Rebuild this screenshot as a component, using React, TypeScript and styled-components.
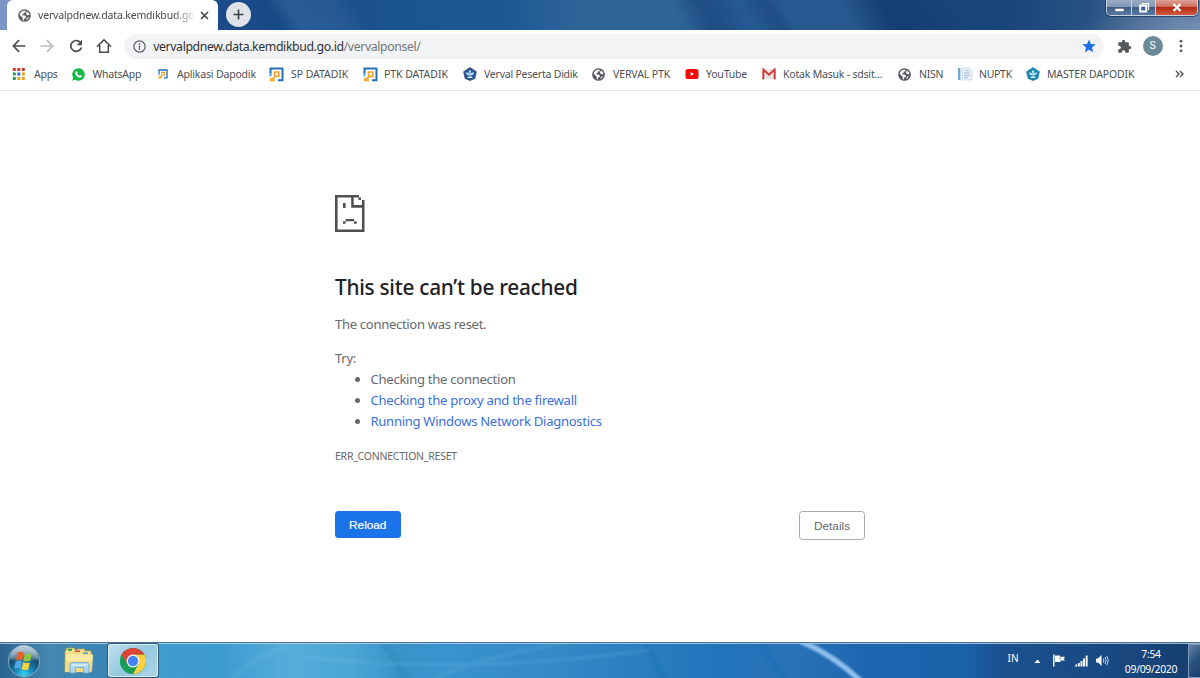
import React from "react";
import styled, { createGlobalStyle, css } from "styled-components";

const GlobalStyle = createGlobalStyle`
  * { box-sizing: border-box; }
  html, body { margin: 0; padding: 0; overflow: hidden; }
  body { font-family: "Noto Sans", "Open Sans", sans-serif; background: #fff; }
  svg { display: block; flex: none; }
`;

const Screen = styled.div`
  width: 1200px;
  height: 678px;
  display: flex;
  flex-direction: column;
  background: #fff;
  overflow: hidden;
`;

const Text = styled.span<{ $spacing?: number }>`
  letter-spacing: ${(p) => p.$spacing ?? 0}px;
  white-space: nowrap;
`;

/* ---------- Tab strip ---------- */

const TabStrip = styled.header`
  height: 30px;
  flex: none;
  display: flex;
  background:
    radial-gradient(ellipse 110px 34px at 1190px 32px, rgba(150, 170, 195, 0.45), transparent),
    linear-gradient(58deg, transparent 241px, rgba(75, 120, 175, 0.36) 256px, rgba(65, 110, 170, 0.3) 298px, transparent 314px),
    linear-gradient(58deg, transparent 585px, rgba(20, 60, 115, 0.5) 607px, transparent 640px, rgba(20, 60, 115, 0.45) 665px, transparent 676px),
    linear-gradient(58deg, transparent 728px, rgba(18, 58, 110, 0.75) 762px, rgba(18, 58, 110, 0) 850px),
    linear-gradient(90deg, #7b96c4 0, #7b96c4 8px, #1d4a88 220px, #174a87 290px, #1c5490 400px, #1d5794 500px, #2f6599 590px, #2f6599 670px, #265a93 720px, #28588f 850px, #1a4a80 900px, #17447b 1000px, #2a5283 1090px, #5b7ba3 1200px);
`;

const Tab = styled.div`
  width: 211px;
  height: 30px;
  margin-left: 7px;
  padding: 0 9px 0 11px;
  display: flex;
  align-items: center;
  background: #fff;
  border-radius: 6px 6px 0 0;
`;

const TabTitle = styled.div`
  width: 155px;
  margin-left: 7px;
  font-size: 10.5px;
  line-height: 16px;
  color: #45494d;
  mask-image: linear-gradient(90deg, #000 135px, rgba(0, 0, 0, 0.3) 153px);
`;

const CloseTab = styled.div`
  margin-left: auto;
`;

const NewTab = styled.div`
  width: 25px;
  height: 25px;
  margin: 2px 0 0 8px;
  border-radius: 50%;
  background: #dfe3e9;
  display: grid;
  place-items: center;
`;

const WindowControls = styled.div`
  height: 16px;
  margin-left: auto;
  margin-right: 2px;
  display: flex;
  border: 1px solid #c4d1e0;
  border-top: 0;
  border-radius: 0 0 5px 5px;
  box-shadow: 0 0 0 1px rgba(20, 40, 75, 0.6);
  overflow: hidden;
`;

const WindowButton = styled.div<{ $width: number; $close?: boolean }>`
  width: ${(p) => p.$width}px;
  display: grid;
  place-items: center;
  border-right: 1px solid #c4d1e0;
  background: linear-gradient(#9aadc5 0, #8097b4 45%, #3f5e86 50%, #5c7ba1 100%);
  ${(p) =>
    p.$close &&
    css`
      border-right: 0;
      background: linear-gradient(#dda296 0, #cc6b59 45%, #b32a15 50%, #d2593c 100%);
    `}
`;

/* ---------- Toolbar ---------- */

const Toolbar = styled.div`
  height: 32px;
  flex: none;
  display: flex;
  align-items: center;
  padding-left: 11px;
  background: #fff;
`;

const NavButtons = styled.div`
  display: flex;
  gap: 12.4px;
`;

const AddressBar = styled.div`
  width: 980px;
  height: 25px;
  margin-left: 12px;
  padding: 0 8px 0 9px;
  display: flex;
  align-items: center;
  border-radius: 13px;
  background: #f1f3f4;
`;

const Url = styled.div`
  flex: 1;
  margin-left: 7px;
  font-size: 12.3px;
  color: #303236;
`;

const UrlPath = styled.span`
  color: #74787c;
`;

const Menu = styled.div`
  display: flex;
  align-items: center;
  gap: 11px;
  margin-left: 12.5px;
`;

const Avatar = styled.div`
  width: 20px;
  height: 20px;
  margin-right: 5px;
  border-radius: 50%;
  background: #6b8996;
  color: #fff;
  display: grid;
  place-items: center;
  font: 10.5px/20px Roboto, sans-serif;
`;

/* ---------- Bookmarks ---------- */

const BookmarkBar = styled.nav`
  height: 29px;
  flex: none;
  display: flex;
  align-items: center;
  padding: 0 16px 4px 11px;
  border-bottom: 1px solid #dcdee1;
`;

const Bookmark = styled.div<{ $width: number; $gap: number }>`
  width: ${(p) => p.$width}px;
  flex: none;
  display: flex;
  align-items: center;
  gap: ${(p) => p.$gap}px;
  font-size: 10.5px;
  line-height: 16px;
  color: #4b4f53;
`;

const Overflow = styled.div`
  margin-left: auto;
`;

/* ---------- Error page ---------- */

const Page = styled.main`
  flex: 1;
  display: flex;
  justify-content: center;
  padding-top: 104px;
`;

const ErrorColumn = styled.section`
  width: 530px;
  font-size: 13.1px;
  line-height: 21px;
  color: #66696d;
`;

const Title = styled.h1`
  margin: 40px 0 0;
  font-size: 20.8px;
  font-weight: 500;
  line-height: 28px;
  color: #202124;
`;

const Paragraph = styled.p<{ $top: number }>`
  margin: ${(p) => p.$top}px 0 0;
`;

const Suggestions = styled.ul`
  margin: 0;
  padding-left: 35.5px;
`;

const Suggestion = styled.li<{ $link?: boolean }>`
  height: 21.2px;
  & > span { color: ${(p) => (p.$link ? "#3b6fdc" : "inherit")}; }
`;

const ErrorCode = styled.div`
  margin-top: 13px;
  font-size: 10.5px;
`;

const Actions = styled.div`
  margin-top: 44px;
  display: flex;
  justify-content: space-between;
`;

const Button = styled.button<{ $primary?: boolean }>`
  width: ${(p) => (p.$primary ? 65.5 : 66)}px;
  height: ${(p) => (p.$primary ? 27.5 : 29)}px;
  padding: 1px 0 0;
  border-radius: 3.5px;
  border: ${(p) => (p.$primary ? "0" : "1px solid #a6a9ad")};
  background: ${(p) => (p.$primary ? "#1a73e8" : "#fff")};
  color: ${(p) => (p.$primary ? "#fff" : "#66696d")};
  font: 11.8px "Liberation Sans", Arial, sans-serif;
  -webkit-text-stroke: ${(p) => (p.$primary ? "0.2px #fff" : "0")};
`;

/* ---------- Taskbar ---------- */

const Taskbar = styled.footer`
  height: 36px;
  flex: none;
  position: relative;
  display: flex;
  border-top: 1px solid #52708f;
  box-shadow: inset 0 1px 0 rgba(190, 220, 240, 0.75);
  background: linear-gradient(90deg, #2a6591 0, #4587ae 50px, #3a86b5 105px, #3f9ccd 160px, #3c9bcf 220px, #55addb 290px, #4ba6d6 350px, #3993c9 400px, #3a94ce 440px, #3488c6 560px, #2b7fc0 640px, #2273bb 720px, #2a72b8 790px, #1d65ae 870px, #1a62aa 965px, #1b5190 1000px, #194a83 1100px, #173f70 1190px);
`;

const Streaks = styled.svg`
  position: absolute;
  left: 160px;
  top: 1px;
`;

const TaskItem = styled.div<{ $left: number; $top?: number }>`
  position: relative;
  margin-left: ${(p) => p.$left}px;
  padding-top: ${(p) => p.$top ?? 2}px;
`;

const ActiveTask = styled.div`
  position: relative;
  width: 50px;
  height: 33px;
  margin: 1px 0 0 14px;
  display: grid;
  place-items: center;
  border: 1px solid #d8ecf5;
  border-radius: 2px;
  box-shadow: 0 0 0 1px #315b79;
  background: linear-gradient(135deg, #c1dfed, #93c7e0 50%, #a9d5e8);
`;

const Tray = styled.div`
  position: relative;
  margin-left: auto;
  display: flex;
  align-items: center;
  color: #fff;
  font-size: 10.4px;
`;

const Language = styled.div`
  width: 26px;
  margin-top: -5px;
  font-size: 10px;
`;

const TrayIcons = styled.div`
  display: flex;
  align-items: center;
  gap: 7.5px;
  margin-right: 15px;
`;

const Caret = styled.div`
  margin-right: 4px;
  padding-top: 1px;
`;

const Clock = styled.div`
  width: 54px;
  margin-right: 10px;
  padding-top: 2px;
  text-align: center;
  line-height: 15px;
`;

const ShowDesktop = styled.div`
  width: 12px;
  height: 34px;
  border: 1px solid #7c9abb;
  border-right: 0;
  background: linear-gradient(135deg, #6585a8, #2c527f 50%, #1b3f6c);
`;

/* ---------- Icons ---------- */

const Globe = ({ size = 13, color = "#55595e" }: { size?: number; color?: string }) => (
  <svg width={size} height={size} viewBox="0 0 16 16">
    <circle cx="8" cy="8" r="7.8" fill={color} />
    <path d="M2 7.200C2.300 4.500 4 2.600 6.500 2l3.200.1-.3 1.900-2.300.5-.2 1.600-2 .8.3.9 3.200.1 1.400 1.600-.3 1.600-1.900.7-.3 2.200-1.500-.1.100-2.600-1.400-1.700z" fill="#fff" opacity=".95" />
    <path d="M11.200 3c1.700 1 2.700 2.500 2.900 4.400l-2.500.2-1.800-1.300.4-1.600zM11 10.800l2.600-.5c-.7 1.500-1.900 2.600-3.400 3.200z" fill="#fff" opacity=".95" />
  </svg>
);

const Back = ({ color = "#494c50", flip = false }: { color?: string; flip?: boolean }) => (
  <svg width="16" height="16" viewBox="0 0 16 16" fill="none" stroke={color} strokeWidth="1.6" transform={flip ? "scale(-1 1)" : undefined}>
    <path d="M14.500 8H2.800M8.200 2.100L2.300 8l5.900 5.900" />
  </svg>
);

const Refresh = () => (
  <svg width="16" height="16" viewBox="0 0 16 16">
    <path d="M12.900 5.200A5.400 5.400 0 1 0 13.400 9.400" fill="none" stroke="#494c50" strokeWidth="1.700" />
    <path d="M14 1.800v5.400H8.600z" fill="#494c50" />
  </svg>
);

const Home = () => (
  <svg width="16" height="16" viewBox="0 0 16 16" fill="none" stroke="#494c50" strokeWidth="1.500">
    <path d="M.9 8.700L8 1.900l7.100 6.800M3.700 7v7.200h8.600V7" />
  </svg>
);

const Info = () => (
  <svg width="13" height="13" viewBox="0 0 13 13">
    <circle cx="6.500" cy="6.500" r="5.600" fill="none" stroke="#5a5e62" strokeWidth="1.200" />
    <path d="M6.500 5.700v4M6.500 3.200v1.500" stroke="#5a5e62" strokeWidth="1.300" />
  </svg>
);

const Star = () => (
  <svg width="14" height="14" viewBox="0 0 24 24">
    <path d="M12 1l3.200 7.500 8.100.7-6.200 5.400L19 22.600 12 18.300 5 22.600l1.900-8L.7 9.200l8.100-.7z" fill="#1a6ee8" />
  </svg>
);

const Puzzle = () => (
  <svg width="15" height="15" viewBox="0 0 24 24">
    <path d="M20.500 11H19V7c0-1.100-.9-2-2-2h-4V3.500a2.500 2.500 0 0 0-5 0V5H4c-1.100 0-2 .9-2 2v3.800h1.500a2.700 2.700 0 0 1 0 5.400H2V20c0 1.100.9 2 2 2h3.800v-1.500a2.700 2.700 0 0 1 5.400 0V22H17c1.100 0 2-.9 2-2v-4h1.500a2.500 2.500 0 0 0 0-5z" fill="#55585c" />
  </svg>
);

const Dots = () => (
  <svg width="4" height="14" viewBox="0 0 4 14" fill="#55585c">
    <circle cx="2" cy="2.200" r="1.400" />
    <circle cx="2" cy="7" r="1.400" />
    <circle cx="2" cy="11.800" r="1.400" />
  </svg>
);

const appColors = ["#d93a32", "#d93a32", "#c8392f", "#2f9e51", "#2874d8", "#e6a51c", "#2f9e51", "#e6a51c", "#e6a51c"];
const AppsGrid = () => (
  <svg width="14" height="14" viewBox="0 0 14 14">
    {appColors.map((c, i) => (
      <rect key={i} x={1.8 + (i % 3) * 4.5} y={1 + Math.floor(i / 3) * 4.5} width="3" height="3" fill={c} />
    ))}
  </svg>
);

const WhatsApp = () => (
  <svg width="13" height="13" viewBox="0 0 24 24">
    <path d="M12 .5A11.500 11.500 0 0 0 2.200 18L.5 23.500l5.700-1.600A11.500 11.500 0 1 0 12 .5z" fill="#17b84b" />
    <path d="M8.300 5.800c.6 0 .8.2 1 .7l.9 2c.1.500-.9 1.500-.9 1.800 1 1.900 2.500 3.300 4.500 4.100.4 0 1.300-1.500 1.700-1.400l2.400 1.200c.5.3.1 1.700-.3 2.300-1 1.300-3 1.400-4.600.9-3.500-1.200-6.300-4.300-7-7-.3-1.800.7-4.500 2.300-4.600z" fill="#fff" />
  </svg>
);

const Dapodik = ({ size = 15 }: { size?: number }) => (
  <svg width={size} height={size} viewBox="0 0 15 15" fill="none">
    <path d="M1.500 6.800V1.500h12v11.700H9" stroke="#2370b5" strokeWidth="2" />
    <path d="M1.500 6v3.500" stroke="#58a6d2" strokeWidth="2" />
    <path d="M1.500 13.800l4-4V5h4.300v4.300H5.500" stroke="#f2a12c" strokeWidth="1.700" />
    <path d="M.8 11h3.400l1.800 1.500v1.800H.8z" fill="#f4ad3d" />
  </svg>
);

const TutWuri = ({ color, rim }: { color: string; rim: string }) => (
  <svg width="14" height="14" viewBox="0 0 16 16">
    <path d="M8 .6l7.300 4.700-1.700 7.800L8 15.500l-5.600-2.400L.7 5.300z" fill={color} stroke={rim} strokeWidth=".8" strokeLinejoin="round" />
    <path d="M3.300 6.400c1.700-.6 3.300 0 4.700 1.600 1.400-1.600 3-2.200 4.700-1.600-.3 1.900-1.500 3-3.400 3.300H6.700C4.800 9.400 3.600 8.300 3.300 6.400z" fill="#bfe0f3" />
    <path d="M8 3l1.300 2.500L8 8 6.700 5.500z" fill="#f6eed8" />
    <path d="M5 11.300l3-.8 3 .8-.4 1.400H5.400z" fill="#f5ede0" />
  </svg>
);

const YouTube = () => (
  <svg width="14" height="14" viewBox="0 0 14 14">
    <rect x=".5" y="2" width="13" height="10" rx="2.600" fill="#f50505" />
    <path d="M5.600 4.900v4.200L9.200 7z" fill="#fff" />
  </svg>
);

const Gmail = () => (
  <svg width="14" height="12" viewBox="0 0 14 12">
    <path d="M1.500 1h11v10h-11z" fill="#e5e4e4" />
    <path d="M1.300 11.500V1.500L7 6.800l5.700-5.300v10" fill="none" stroke="#cf3b30" strokeWidth="1.900" />
  </svg>
);

const Documents = () => (
  <svg width="15" height="14" viewBox="0 0 15 14">
    <rect x="0" y="1" width="2.400" height="12" fill="#6ca8d8" />
    <path d="M4 1h7.500L14 3.500V13H4z" fill="#e8f0f8" stroke="#bccedf" strokeWidth=".6" />
    <path d="M8 3.500h3M6 6h6M6 8.300h6M6 10.700h4" stroke="#8fb0cf" strokeWidth=".8" />
  </svg>
);

const SadPage = () => (
  <svg width="30" height="38" viewBox="0 0 30 38" fill="#505050">
    <path d="M0 0h24v2.500H2.600v32H27V5h2.500v32H0z" />
    <path d="M16.200 0h2.500v10h9v2.700H16.200zM23.500 2.500H26V5h-2.500z" />
    <path d="M8 8h2.600v5H8zM10.600 24h8.500v2.300h-8.500zM8 26.300h2.600v2.500H8zM19.100 26.300h2.600v2.500h-2.600z" />
  </svg>
);

const StartOrb = () => (
  <svg width="34" height="33" viewBox="0 0 34 33">
    <defs>
      <radialGradient id="orb" cx="50%" cy="92%" r="75%">
        <stop offset="0" stopColor="#35d5f0" />
        <stop offset=".38" stopColor="#1684b5" />
        <stop offset=".75" stopColor="#15486f" />
        <stop offset="1" stopColor="#537d9a" />
      </radialGradient>
      <linearGradient id="orbShine" x2="0" y2="1">
        <stop offset="0" stopColor="#fff" stopOpacity=".65" />
        <stop offset="1" stopColor="#fff" stopOpacity=".15" />
      </linearGradient>
    </defs>
    <circle cx="17" cy="16" r="15.700" fill="url(#orb)" stroke="#8db2c8" strokeWidth=".9" />
    <path d="M3 14a14 13.500 0 0 1 28 0c-7 3-21 3-28 0z" fill="url(#orbShine)" />
    <path d="M10.500 7.300c2.200-1 4.300-.8 6.200.3l-1.500 7.600c-2-1-4-1.100-6.200-.2z" fill="#e8602c" />
    <path d="M17.900 8.200c2.200 1.100 4.500 1.100 7 .1l-1.700 7.500c-2.300 1-4.600 1-6.800-.1z" fill="#8fc641" />
    <path d="M8.700 16.200c2.200-.9 4.300-.7 6.300.3l-1.500 7.200c-2-1-4.200-1.100-6.400-.2z" fill="#52a9e2" />
    <path d="M16.100 17c2.200 1.100 4.500 1.200 6.800.2l-1.700 7.200c-2.200 1-4.500.8-6.600-.3z" fill="#fcd244" />
  </svg>
);

const Explorer = () => (
  <svg width="30" height="30" viewBox="0 0 30 30">
    <path d="M2 4l1-2h7l1 2h2l1-1h6l1 2h6v21H1V6z" fill="#f4df8c" stroke="#c5a346" strokeWidth=".7" />
    <path d="M4 2.800h4v2H4z" fill="#23a64e" />
    <path d="M11 4.500h5v1.600h-5z" fill="#d85136" />
    <path d="M19 6.500h5v1.600h-5z" fill="#4b9fc9" />
    <path d="M3 8.500h26l-1 17H1z" fill="#fae9a3" />
    <path d="M1 24l1-9h26v10H1z" fill="#efcf6c" opacity=".6" />
    <path d="M6 27v-7.500a3 3 0 0 1 3-3h13a3 3 0 0 1 3 3V27h-5.500v-5.500h-8V27z" fill="#a9d7ef" stroke="#6baad0" strokeWidth=".8" />
    <path d="M7.500 19h16" stroke="#e3f4fb" strokeWidth="1.300" />
  </svg>
);

const Chrome = () => (
  <svg width="28" height="28" viewBox="0 0 48 48">
    <circle cx="24" cy="24" r="22.500" fill="#199e58" />
    <path d="M43.500 13H24v11l9.500 5.500L24 46.500A22.500 22.500 0 0 0 43.500 13z" fill="#fdd23e" />
    <path d="M43.500 13A22.500 22.500 0 0 0 4.500 12.800L14.500 29.500 24 24V13z" fill="#dc4437" />
    <circle cx="24" cy="24" r="11" fill="#f4f7fa" />
    <circle cx="24" cy="24" r="8.800" fill="#4584f3" />
  </svg>
);

const Flag = () => (
  <svg width="15" height="13" viewBox="0 0 15 13">
    <path d="M1.800.5v12" stroke="#fff" strokeWidth="1.400" />
    <path d="M3 1.500h5v1.300h5l-1.200 2L13 6.500H8.500V8H3z" fill="#fff" />
    <path d="M8 3v3" stroke="#285384" strokeWidth=".6" />
  </svg>
);

const Signal = () => (
  <svg width="13" height="12" viewBox="0 0 13 12" fill="#fff">
    {[2, 3.5, 5.5, 8, 11].map((h, i) => (
      <rect key={i} x={0.3 + i * 2.6} y={11.5 - h} width="1.900" height={h} />
    ))}
  </svg>
);

const Speaker = () => (
  <svg width="14" height="13" viewBox="0 0 14 13">
    <path d="M1 4.500h2L6.500 1v11L3 8.500H1z" fill="#fff" />
    <path d="M8.200 4.500q1.300 2 0 4M10 3q2.200 3.500 0 7M11.800 1.800q3 4.700 0 9.400" fill="none" stroke="#d9e5f2" strokeWidth=".9" />
  </svg>
);

/* ---------- Data ---------- */

type Item = { label: string; icon: React.ReactNode; width: number; gap: number; spacing: number };

const bookmarks: Item[] = [
  { label: "Apps", icon: <AppsGrid />, width: 61, gap: 9, spacing: -0.25 },
  { label: "WhatsApp", icon: <WhatsApp />, width: 86, gap: 7.5, spacing: -0.25 },
  { label: "Aplikasi Dapodik", icon: <Dapodik size={10} />, width: 111, gap: 9, spacing: -0.18 },
  { label: "SP DATADIK", icon: <Dapodik />, width: 94, gap: 7, spacing: -0.05 },
  { label: "PTK DATADIK", icon: <Dapodik />, width: 100, gap: 6, spacing: -0.05 },
  { label: "Verval Peserta Didik", icon: <TutWuri color="#1e5a9c" rim="#3a4560" />, width: 129, gap: 7, spacing: -0.22 },
  { label: "VERVAL PTK", icon: <Globe />, width: 93, gap: 8, spacing: -0.1 },
  { label: "YouTube", icon: <YouTube />, width: 77, gap: 7, spacing: -0.2 },
  { label: "Kotak Masuk - sdsit...", icon: <Gmail />, width: 136, gap: 7, spacing: -0.2 },
  { label: "NISN", icon: <Globe />, width: 60, gap: 8, spacing: -0.3 },
  { label: "NUPTK", icon: <Documents />, width: 68, gap: 6, spacing: -0.3 },
  { label: "MASTER DAPODIK", icon: <TutWuri color="#1688b4" rim="#1f7fa5" />, width: 130, gap: 7, spacing: -0.15 },
];

export default function App() {
  return (
    <>
      <GlobalStyle />
      <Screen>
        <TabStrip>
          <Tab>
            <Globe color="#606468" />
            <TabTitle><Text $spacing={-0.17}>vervalpdnew.data.kemdikbud.go</Text></TabTitle>
            <CloseTab>
              <svg width="9" height="9" viewBox="0 0 9 9">
                <path d="M1 1l7 7M8 1L1 8" stroke="#3c4043" strokeWidth="1.500" />
              </svg>
            </CloseTab>
          </Tab>
          <NewTab>
            <svg width="11" height="11" viewBox="0 0 11 11">
              <path d="M5.500.5v10M.5 5.500h10" stroke="#3c4043" strokeWidth="1.600" />
            </svg>
          </NewTab>
          <WindowControls>
            <WindowButton $width={25}>
              <svg width="11" height="14" viewBox="0 0 11 14"><rect x="1" y="7.500" width="9" height="3" fill="#fff" stroke="#46566d" strokeWidth=".5" /></svg>
            </WindowButton>
            <WindowButton $width={24}>
              <svg width="12" height="12" viewBox="0 0 12 12" fill="none">
                <path d="M4 1.500h6.500V8" stroke="#fff" strokeWidth="1.200" />
                <rect x="2.200" y="3.500" width="6" height="6" stroke="#fff" strokeWidth="2" />
              </svg>
            </WindowButton>
            <WindowButton $width={41} $close>
              <svg width="10" height="9" viewBox="0 0 10 9"><path d="M1.500 1l7 7M8.500 1l-7 7" stroke="#fff" strokeWidth="2.400" /></svg>
            </WindowButton>
          </WindowControls>
        </TabStrip>

        <Toolbar>
          <NavButtons>
            <Back />
            <Back color="#b9bbbe" flip />
            <Refresh />
            <Home />
          </NavButtons>
          <AddressBar>
            <Info />
            <Url><Text $spacing={-0.39}>vervalpdnew.data.kemdikbud.go.id<UrlPath>/vervalponsel/</UrlPath></Text></Url>
            <Star />
          </AddressBar>
          <Menu>
            <Puzzle />
            <Avatar>S</Avatar>
            <Dots />
          </Menu>
        </Toolbar>

        <BookmarkBar>
          {bookmarks.map((b) => (
            <Bookmark key={b.label} $width={b.width} $gap={b.gap}>
              {b.icon}
              <Text $spacing={b.spacing}>{b.label}</Text>
            </Bookmark>
          ))}
          <Overflow>
            <svg width="9" height="8" viewBox="0 0 9 8" fill="none" stroke="#4b4f53" strokeWidth="1.400">
              <path d="M1 1l3 3-3 3M5 1l3 3-3 3" />
            </svg>
          </Overflow>
        </BookmarkBar>

        <Page>
          <ErrorColumn>
            <SadPage />
            <Title><Text $spacing={-0.27}>This site can’t be reached</Text></Title>
            <Paragraph $top={13}><Text $spacing={-0.33}>The connection was reset.</Text></Paragraph>
            <Paragraph $top={13}><Text $spacing={-0.3}>Try:</Text></Paragraph>
            <Suggestions>
              <Suggestion><Text $spacing={-0.29}>Checking the connection</Text></Suggestion>
              <Suggestion $link><Text $spacing={-0.29}>Checking the proxy and the firewall</Text></Suggestion>
              <Suggestion $link><Text $spacing={-0.31}>Running Windows Network Diagnostics</Text></Suggestion>
            </Suggestions>
            <ErrorCode><Text $spacing={-0.24}>ERR_CONNECTION_RESET</Text></ErrorCode>
            <Actions>
              <Button $primary>Reload</Button>
              <Button>Details</Button>
            </Actions>
          </ErrorColumn>
        </Page>

        <Taskbar>
          <Streaks width="800" height="35" viewBox="160 0 800 35">
            <defs>
              <filter id="soft"><feGaussianBlur stdDeviation="1.200" /></filter>
            </defs>
            <g filter="url(#soft)" fill="none">
              <path d="M385 0l10 16 12 20" stroke="#2a80b5" strokeWidth="8" opacity=".35" />
              <path d="M430 36Q490 10 570 -2M300 12Q460 32 650 6" stroke="#8cc6ea" strokeWidth="4" opacity=".13" />
              <path d="M230 36Q255 14 290 0" stroke="#8fd0ee" strokeWidth="6" opacity=".1" />
              <path d="M645 0l20 36M760 0l25 36" stroke="#1765a8" strokeWidth="7" opacity=".2" />
              <path d="M800 -3Q832 10 862 38" stroke="#96c4f2" strokeWidth="5.500" opacity=".95" />
            </g>
          </Streaks>
          <TaskItem $left={7}><StartOrb /></TaskItem>
          <TaskItem $left={23} $top={3}><Explorer /></TaskItem>
          <ActiveTask><Chrome /></ActiveTask>
          <Tray>
            <Language>IN</Language>
            <TrayIcons>
              <Caret>
                <svg width="7" height="4" viewBox="0 0 7 4"><path d="M.5 4L3.500.5l3 3.500z" fill="#fff" /></svg>
              </Caret>
              <Flag />
              <Signal />
              <Speaker />
            </TrayIcons>
            <Clock>
              <div><Text $spacing={-0.3}>7:54</Text></div>
              <div><Text $spacing={-0.3}>09/09/2020</Text></div>
            </Clock>
            <ShowDesktop />
          </Tray>
        </Taskbar>
      </Screen>
    </>
  );
}
